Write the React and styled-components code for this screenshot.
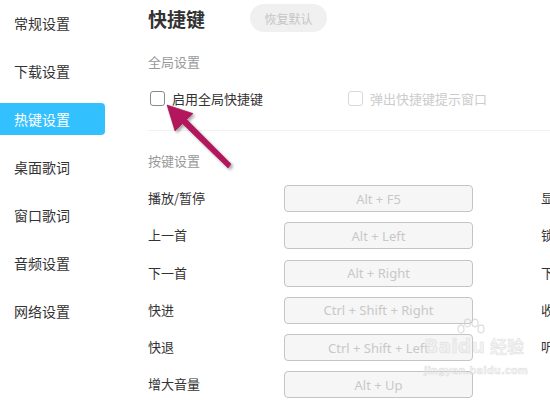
import React from 'react';
import styled, { createGlobalStyle } from 'styled-components';

const GlobalStyle = createGlobalStyle`
  html, body {
    margin: 0;
    padding: 0;
    background: #ffffff;
    overflow: hidden;
  }
  body {
    font-family: "Noto Sans", "Noto Sans CJK SC", sans-serif;
    color: #333;
  }
`;

const Page = styled.div`
  position: relative;
  display: flex;
  width: 550px;
  height: 400px;
  overflow: hidden;
`;

const Sidebar = styled.nav`
  flex: 0 0 105px;
  display: flex;
  flex-direction: column;
  gap: 16px;
  padding-top: 7px;
`;

const NavItem = styled.div`
  height: 32px;
  line-height: 32px;
  padding-left: 14px;
  font-size: 14px;
  font-family: "Noto Sans CJK SC", sans-serif;
  color: ${p => (p.$active ? '#ffffff' : '#333333')};
  background: ${p => (p.$active ? '#33c0ff' : 'transparent')};
  border-radius: 0 4px 4px 0;
`;

const Main = styled.main`
  flex: 0 0 820px;
  margin-left: 43px;
  display: flex;
  flex-direction: column;
`;

const Header = styled.header`
  display: flex;
  align-items: center;
  height: 36px;
`;

const Title = styled.h1`
  margin: 0;
  font-size: 19px;
  font-weight: 700;
  color: #333;
  font-family: "Noto Sans CJK SC", sans-serif;
`;

const ResetButton = styled.button`
  margin-left: 45px;
  width: 77px;
  height: 28px;
  border: none;
  border-radius: 14px;
  background: #f0f0f0;
  color: #c6c6c6;
  font-size: 12px;
  font-family: "Noto Sans CJK SC", sans-serif;
`;

const SectionTitle = styled.div`
  margin-top: ${p => p.$top}px;
  height: 20px;
  line-height: 20px;
  font-size: 13px;
  color: #999;
  font-family: "Noto Sans CJK SC", sans-serif;
`;

const CheckRow = styled.div`
  display: flex;
  margin-top: 16px;
  height: 20px;
`;

const CheckItem = styled.label`
  display: flex;
  align-items: center;
  gap: 7px;
  width: ${p => p.$width || 'auto'};
  padding-left: 2px;
  box-sizing: border-box;
  font-size: 13px;
  font-family: "Noto Sans CJK SC", sans-serif;
  color: ${p => (p.$disabled ? '#cccccc' : '#333333')};
`;

const Box = styled.span`
  width: 13px;
  height: 13px;
  border: 1px solid ${p => (p.$disabled ? '#d8d8d8' : '#8a8a8a')};
  border-radius: 3px;
  background: #fff;
`;

const Divider = styled.div`
  margin-top: 22px;
  height: 1px;
  background: #f1f1f1;
`;

const KeyGrid = styled.div`
  margin-top: 14px;
  display: grid;
  grid-template-columns: 136px 189px 68px 136px 189px;
  grid-auto-rows: 27px;
  row-gap: 10.3px;
  align-items: center;
`;

const KeyLabel = styled.div`
  font-size: 13px;
  color: #333;
  font-family: "Noto Sans CJK SC", sans-serif;
  white-space: nowrap;
  margin-top: -2px;
`;

const KeyInput = styled.div`
  height: 27px;
  box-sizing: border-box;
  border: 1px solid #c4c4c4;
  border-radius: 4px;
  background: #f6f6f6;
  color: #c8c8c8;
  font-size: 13px;
  font-family: "Noto Sans", sans-serif;
  display: flex;
  align-items: center;
  justify-content: center;
`;

const Spacer = styled.div``;

const ArrowMark = styled.svg`
  position: absolute;
  left: 155px;
  top: 95px;
  width: 90px;
  height: 85px;
  pointer-events: none;
`;

const Watermark = styled.div`
  position: absolute;
  left: 424px;
  top: 316px;
  width: 100px;
  display: flex;
  flex-direction: column;
  align-items: flex-start;
  white-space: nowrap;
  pointer-events: none;
  font-family: "DejaVu Sans", "Noto Sans CJK SC", sans-serif;
  color: rgba(235, 235, 235, 0.6);
  -webkit-text-stroke: 0.5px rgba(200, 200, 200, 0.5);
`;

const WmLogo = styled.div`
  position: relative;
  display: flex;
  align-items: flex-end;
  font-size: 19px;
  font-weight: 700;
  line-height: 24px;
  margin-top: 18px;
  svg {
    position: absolute;
    left: 32px;
    top: -16px;
  }
`;

const WmCn = styled.span`
  margin-left: 5px;
  font-size: 17px;
  font-family: "Noto Sans CJK SC", sans-serif;
`;

const WmUrl = styled.div`
  font-size: 10px;
  line-height: 14px;
  margin-top: 6px;
  font-weight: 700;
`;

const navItems = ['常规设置', '下载设置', '热键设置', '桌面歌词', '窗口歌词', '音频设置', '网络设置'];

const keyRows = [
  ['播放/暂停', 'Alt + F5', '显示/隐藏主界面', 'Alt + M'],
  ['上一首', 'Alt + Left', '锁定/解锁歌词', 'Alt + L'],
  ['下一首', 'Alt + Right', '下载歌曲', 'Alt + D'],
  ['快进', 'Ctrl + Shift + Right', '收藏歌曲', 'Alt + S'],
  ['快退', 'Ctrl + Shift + Left', '听歌识曲', 'Alt + T'],
  ['增大音量', 'Alt + Up', '', ''],
];

function App() {
  return (
    <>
      <GlobalStyle />
      <Page>
        <Sidebar>
          {navItems.map(item => (
            <NavItem key={item} $active={item === '热键设置'}>{item}</NavItem>
          ))}
        </Sidebar>
        <Main>
          <Header>
            <Title>快捷键</Title>
            <ResetButton>恢复默认</ResetButton>
          </Header>
          <SectionTitle $top={16}>全局设置</SectionTitle>
          <CheckRow>
            <CheckItem $width="198px"><Box />启用全局快捷键</CheckItem>
            <CheckItem $disabled><Box $disabled />弹出快捷键提示窗口</CheckItem>
          </CheckRow>
          <Divider />
          <SectionTitle $top={20}>按键设置</SectionTitle>
          <KeyGrid>
            {keyRows.map(([l1, k1, l2, k2]) => (
              <React.Fragment key={l1}>
                <KeyLabel>{l1}</KeyLabel>
                <KeyInput>{k1}</KeyInput>
                <Spacer />
                <KeyLabel>{l2}</KeyLabel>
                {k2 ? <KeyInput>{k2}</KeyInput> : <Spacer />}
              </React.Fragment>
            ))}
          </KeyGrid>
        </Main>

        <ArrowMark viewBox="155 95 90 85">
          <defs>
            <filter id="arrowShadow" x="-30%" y="-30%" width="160%" height="160%">
              <feDropShadow dx="2" dy="2" stdDeviation="1.6" floodColor="#000" floodOpacity="0.35" />
            </filter>
          </defs>
          <polygon
            points="167,105 193,113.5 186.6,119.4 231,164 228,168 182.4,123.6 175,131"
            fill="#b3185b"
            stroke="#9a0f4b"
            strokeWidth="0.6"
            strokeLinejoin="round"
            filter="url(#arrowShadow)"
          />
        </ArrowMark>

        <Watermark>
          <WmLogo>
            <svg width="30" height="22" viewBox="0 0 30 22">
              <g fill="none" stroke="rgba(205,205,205,0.7)" strokeWidth="1.2">
                <ellipse cx="5" cy="11" rx="3" ry="3.8" />
                <ellipse cx="11.5" cy="5" rx="3" ry="3.8" />
                <ellipse cx="19" cy="5" rx="3" ry="3.8" />
                <ellipse cx="25" cy="11" rx="3" ry="3.8" />
              </g>
            </svg>
            <span>Baidu</span>
            <WmCn>经验</WmCn>
          </WmLogo>
          <WmUrl>jingyan.baidu.com</WmUrl>
        </Watermark>
      </Page>
    </>
  );
}

export default App;
